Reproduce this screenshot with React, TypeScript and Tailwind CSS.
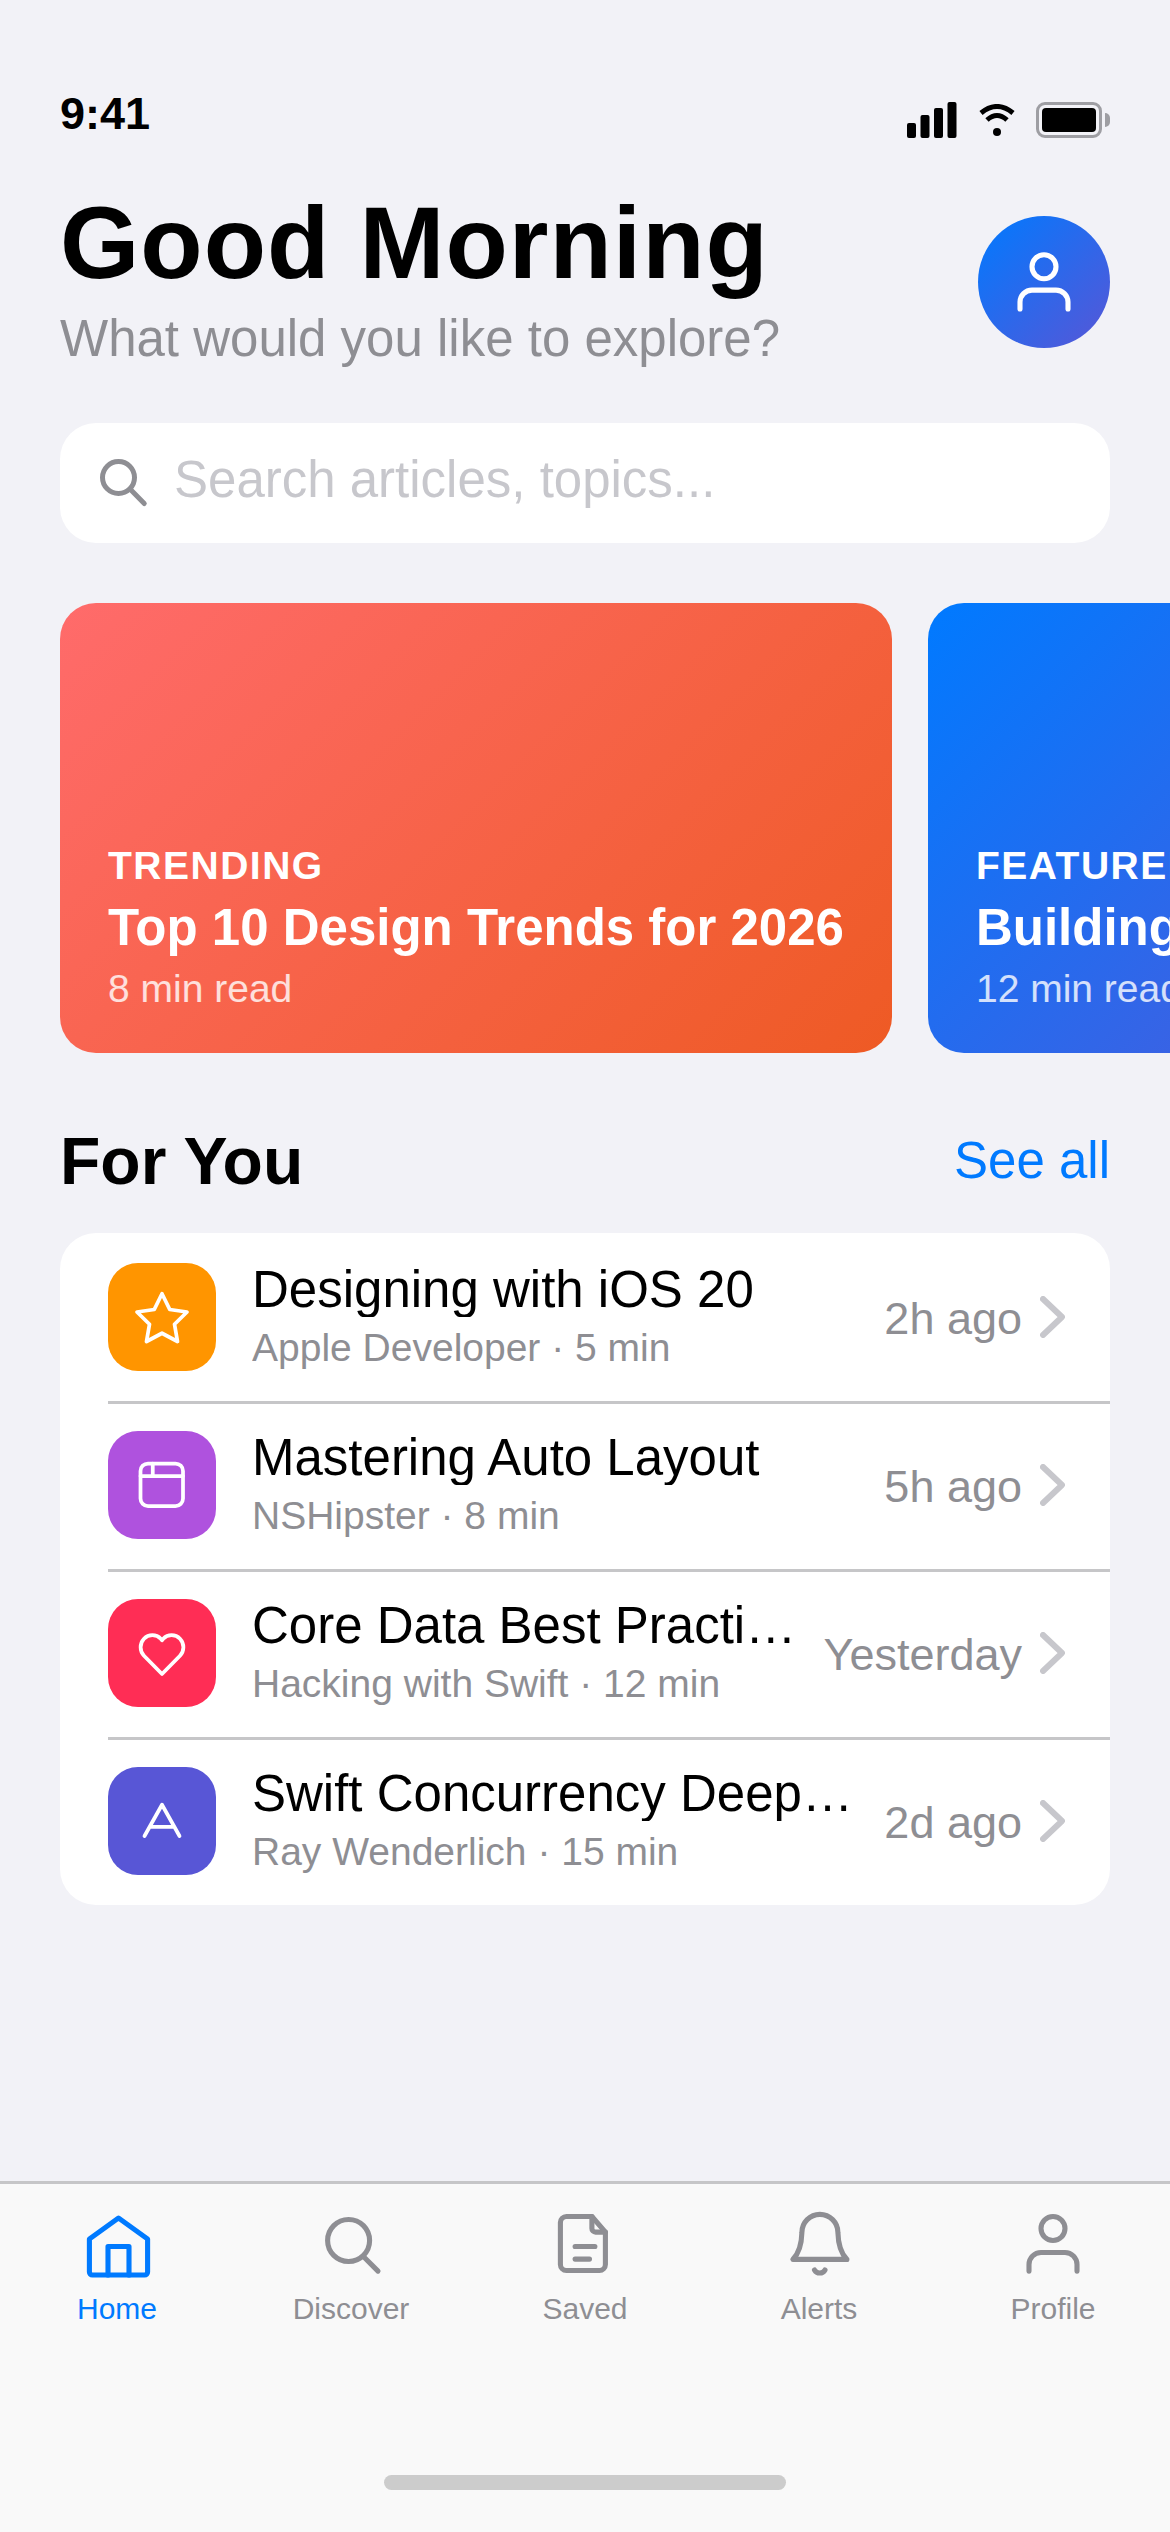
import { ReactNode } from "react";

const font = "font-['Liberation_Sans',Arial,sans-serif]";

const articles = [
  { title: "Designing with iOS 20", meta: "Apple Developer · 5 min", time: "2h ago", bg: "bg-[#FF9500]", icon: "star" },
  { title: "Mastering Auto Layout", meta: "NSHipster · 8 min", time: "5h ago", bg: "bg-[#AF52DE]", icon: "window" },
  { title: "Core Data Best Practices", meta: "Hacking with Swift · 12 min", time: "Yesterday", bg: "bg-[#FF2D55]", icon: "heart" },
  { title: "Swift Concurrency Deep Dive", meta: "Ray Wenderlich · 15 min", time: "2d ago", bg: "bg-[#5856D6]", icon: "a" },
];

function Icon({ size, stroke = 2, className, children }: { size: number; stroke?: number; className?: string; children: ReactNode }) {
  return (
    <svg width={size} height={size} viewBox="0 0 24 24" fill="none" stroke="currentColor" strokeWidth={stroke} strokeLinecap="round" strokeLinejoin="round" className={className}>
      {children}
    </svg>
  );
}

function ArticleIcon({ name }: { name: string }) {
  if (name === "star") return <Icon size={60} stroke={1.5}><path d="M12 2.700L15.100 9L22 10L17 14.900L18.200 21.800L12 18.500L5.800 21.800L7 14.900L2 10L8.900 9Z" /></Icon>;
  if (name === "window") return <Icon size={60} stroke={1.5}><rect x="3.400" y="3.400" width="17" height="17" rx="3" /><path d="M3.400 8.400h17M8.300 3.400v5" /></Icon>;
  if (name === "heart") return <Icon size={60} stroke={1.5}><path d="M12 20.400l-7.200-7.300c-1.800-1.900-1.800-4.900 0-6.800s4.900-1.900 6.700 0l.5.6.5-.6c1.800-1.900 4.900-1.900 6.700 0s1.800 4.900 0 6.800z" /></Icon>;
  return <Icon size={60} stroke={1.5}><path d="M5 18L12 5.500L19 18M7.200 14.300h9.600" /></Icon>;
}

const tabs = [
  { label: "Home", active: true, icon: <><path d="M12.500 3L22.200 10V21a1 1 0 0 1-1 1H3.800a1 1 0 0 1-1-1V10z" /><path d="M9 22v-9.500h7V22" /></> },
  { label: "Discover", active: false, icon: <><circle cx="11.200" cy="10.500" r="7" /><path d="M16.300 16L21 20.700" /></> },
  { label: "Saved", active: false, icon: <><path d="M14.300 2.500H5.800a2 2 0 0 0-2 2v14a2 2 0 0 0 2 2h11a2 2 0 0 0 2-2V7.700z" /><path d="M14.300 2.500v4a1.200 1.200 0 0 0 1.200 1.200h3.300M8.700 12.500h6.600M8.700 16.700h4.800" /></> },
  { label: "Alerts", active: false, icon: <><path d="M3.300 16.800h18c-2-2-2.900-4.800-3-9a6 6 0 0 0-12 0c-.1 4.200-1 7-3 9z" /><path d="M10.500 20.300a2 2 0 0 0 3.500 0" /></> },
  { label: "Profile", active: false, icon: <><circle cx="12" cy="6.500" r="4" /><path d="M4 20.700v-2.200a4 4 0 0 1 4-4h8a4 4 0 0 1 4 4v2.200" /></> },
];

function FeatureCard({ tag, title, read, bg }: { tag: string; title: string; read: string; bg: string }) {
  return (
    <div className={`${bg} h-[450px] shrink-0 rounded-[36px] px-[48px] pb-[42px] flex flex-col justify-end text-white`}>
      <div className="text-[39px] leading-[45px] font-bold tracking-[1.5px]">{tag}</div>
      <div className="text-[51px] leading-[60px] font-bold mt-[10px] whitespace-nowrap">{title}</div>
      <div className="text-[39px] leading-[45px] mt-[8px] text-white/80 whitespace-nowrap">{read}</div>
    </div>
  );
}

export default function App() {
  return (
    <div className={`${font} w-[1170px] h-[2532px] bg-[#F2F2F7] flex flex-col overflow-hidden text-black`}>
      {/* status bar */}
      <div className="flex justify-between items-start px-[60px] pt-[88px] h-[185px] shrink-0">
        <span className="text-[45px] leading-[52px] font-bold">9:41</span>
        <div className="flex items-center gap-[21px] mt-[14px]">
          <svg width="51" height="36" viewBox="0 0 51 36" fill="black">
            <rect x="0" y="21" width="9" height="15" rx="2" />
            <rect x="13.500" y="13" width="9" height="23" rx="2" />
            <rect x="27" y="6" width="9" height="30" rx="2" />
            <rect x="40.500" y="0" width="9" height="36" rx="2" />
          </svg>
          <svg width="36" height="32" viewBox="0 0 36 32" fill="none" stroke="black" strokeWidth="5">
            <path d="M2 9Q18 -4 34 9" />
            <path d="M8 16Q18 7 28 16" />
            <circle cx="18" cy="28" r="4" fill="black" stroke="none" />
          </svg>
          <div className="flex items-center gap-[3px]">
            <div className="w-[66px] h-[36px] rounded-[9px] border-[3px] border-[#9E9EA3] p-[3px]">
              <div className="w-full h-full rounded-[4px] bg-black" />
            </div>
            <div className="w-[5px] h-[14px] rounded-r-[5px] bg-[#9E9EA3]" />
          </div>
        </div>
      </div>

      {/* header */}
      <div className="flex justify-between items-start px-[60px]">
        <div>
          <h1 className="text-[102px] leading-[117px] font-bold tracking-[1px]">Good Morning</h1>
          <p className="text-[51px] leading-[60px] mt-[7px] text-[#8E8E93]">What would you like to explore?</p>
        </div>
        <div className="w-[132px] h-[132px] mt-[31px] rounded-full bg-[linear-gradient(135deg,#007AFF,#5856D6)] flex items-center justify-center text-white">
          <Icon size={72} stroke={1.7}><circle cx="12" cy="6.900" r="4" /><path d="M4 21v-2.300a4 4 0 0 1 4-4h8a4 4 0 0 1 4 4V21" /></Icon>
        </div>
      </div>

      {/* search */}
      <div className="mx-[60px] mt-[54px] h-[120px] rounded-[36px] bg-white flex items-center px-[36px] gap-[18px] shrink-0">
        <Icon size={60} stroke={2} className="text-[#8E8E93] shrink-0 mb-[2px]"><circle cx="9" cy="10.200" r="6.400" /><path d="M14 15.200L19.300 20.600" /></Icon>
        <span className="text-[51px] mb-[6px] text-[#C7C7CC]">Search articles, topics...</span>
      </div>

      {/* featured */}
      <div className="flex gap-[36px] pl-[60px] mt-[60px] overflow-hidden shrink-0">
        <FeatureCard tag="TRENDING" title="Top 10 Design Trends for 2026" read="8 min read" bg="bg-[linear-gradient(135deg,#FF6B6B,#EE5A24)]" />
        <FeatureCard tag="FEATURED" title="Building Modern Apps" read="12 min read" bg="bg-[linear-gradient(135deg,#007AFF,#5856D6)]" />
      </div>

      {/* for you */}
      <div className="flex justify-between items-center px-[60px] mt-[72px] h-[72px] shrink-0">
        <h2 className="text-[66px] font-bold">For You</h2>
        <span className="text-[51px] text-[#007AFF]">See all</span>
      </div>

      <div className="mx-[60px] mt-[36px] bg-white rounded-[36px] overflow-hidden shrink-0">
        {articles.map((a, i) => (
          <div key={a.title}>
            <div className="flex items-center h-[168px] pl-[48px] pr-[45px]">
              <div className={`${a.bg} w-[108px] h-[108px] rounded-[30px] flex items-center justify-center text-white shrink-0`}>
                <ArticleIcon name={a.icon} />
              </div>
              <div className="flex-1 min-w-0 ml-[36px]">
                <div className="text-[51px] leading-[54px] truncate">{a.title}</div>
                <div className="text-[39px] leading-[48px] mt-[7px] text-[#8E8E93] truncate">{a.meta}</div>
              </div>
              <span className="text-[45px] text-[#8E8E93] ml-[24px] mt-[3px] shrink-0 whitespace-nowrap">{a.time}</span>
              <svg width="25" height="42" viewBox="0 0 25 42" fill="none" stroke="#C7C7CC" strokeWidth="6" strokeLinecap="round" strokeLinejoin="round" className="ml-[18px] shrink-0">
                <path d="M3 3L22 21L3 39" />
              </svg>
            </div>
            {i < articles.length - 1 && <div className="h-[3px] -mb-[3px] ml-[48px] bg-[#C6C6C8] relative" />}
          </div>
        ))}
      </div>

      {/* tab bar */}
      <div className="mt-auto h-[351px] bg-[#F9F9F9] border-t-[3px] border-[#C6C6C8] flex flex-col shrink-0">
        <div className="grid grid-cols-5 pt-[25px]">
          {tabs.map((t) => (
            <div key={t.label} className={`flex flex-col items-center ${t.active ? "text-[#007AFF]" : "text-[#8E8E93]"}`}>
              <Icon size={72} stroke={1.7}>{t.icon}</Icon>
              <span className="text-[30px] leading-[36px] mt-[10px]">{t.label}</span>
            </div>
          ))}
        </div>
        <div className="mt-auto mb-[42px] mx-auto w-[402px] h-[15px] rounded-full bg-[#CCCCCC]" />
      </div>
    </div>
  );
}
